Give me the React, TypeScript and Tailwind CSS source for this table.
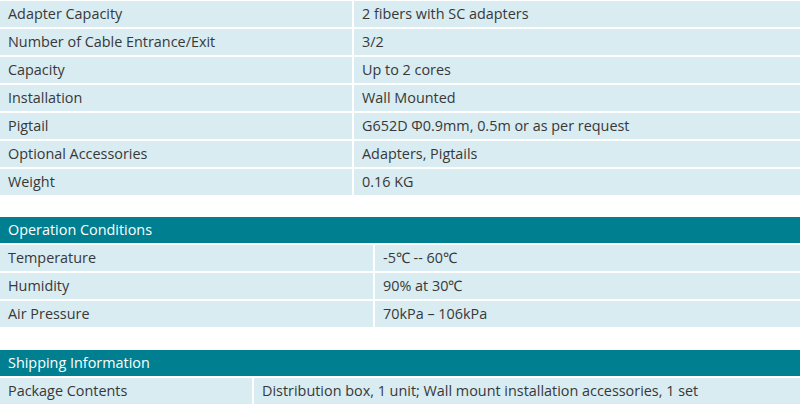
const general: [string, string][] = [
  ['Adapter Capacity', '2 fibers with SC adapters'],
  ['Number of Cable Entrance/Exit', '3/2'],
  ['Capacity', 'Up to 2 cores'],
  ['Installation', 'Wall Mounted'],
  ['Pigtail', 'G652D Φ0.9mm, 0.5m or as per request'],
  ['Optional Accessories', 'Adapters, Pigtails'],
  ['Weight', '0.16 KG'],
];

const operation: [string, string][] = [
  ['Temperature', '-5℃ -- 60℃'],
  ['Humidity', '90% at 30℃'],
  ['Air Pressure', '70kPa – 106kPa'],
];

const shipping: [string, string][] = [
  ['Package Contents', 'Distribution box, 1 unit; Wall mount installation accessories, 1 set'],
];

function Rows({ rows, cols }: { rows: [string, string][]; cols: string }) {
  return (
    <div className={`grid ${cols} gap-[2px]`}>
      {rows.map(([label, value]) => (
        <div key={label} className="contents">
          <div className="h-[26px] bg-[#d9ecf2] px-2 flex items-center whitespace-nowrap">{label}</div>
          <div className="h-[26px] bg-[#d9ecf2] px-2 flex items-center whitespace-nowrap">{value}</div>
        </div>
      ))}
    </div>
  );
}

function Header({ title }: { title: string }) {
  return (
    <div className="h-[26px] bg-[#007f91] text-white px-2 flex items-center">{title}</div>
  );
}

export default function App() {
  return (
    <div
      className="w-[800px] h-[406px] overflow-hidden bg-white text-[14.4px] text-[#383838] pt-px"
      style={{ fontFamily: '"Open Sans", "Liberation Sans", sans-serif' }}
    >
      <Rows rows={general} cols="grid-cols-[352px_1fr]" />

      <div className="mt-[22px] flex flex-col gap-[2px]">
        <Header title="Operation Conditions" />
        <Rows rows={operation} cols="grid-cols-[373px_1fr]" />
      </div>

      <div className="mt-[23px] flex flex-col gap-[2px]">
        <Header title="Shipping Information" />
        <Rows rows={shipping} cols="grid-cols-[252px_1fr]" />
      </div>
    </div>
  );
}
